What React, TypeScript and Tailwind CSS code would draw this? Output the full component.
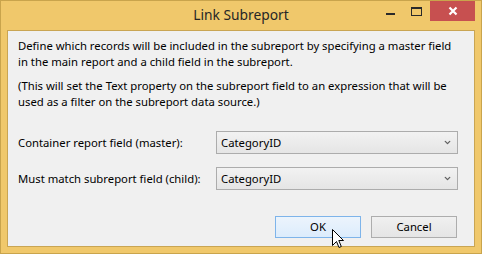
import { ChevronDown } from 'lucide-react'

function Combo({ value }: { value: string }) {
  return (
    <div className="flex h-[23px] w-[242px] items-center justify-between border border-[#acacac] bg-gradient-to-b from-[#f2f2f2] to-[#e5e5e5] pl-[4px] pr-[5px]">
      <span className="leading-4">{value}</span>
      <ChevronDown className="h-[9px] w-[9px] text-[#606060]" strokeWidth={3.5} />
    </div>
  )
}

function Cursor() {
  return (
    <svg className="pointer-events-none absolute left-[56px] top-[12px]" width="13" height="20" viewBox="0 0 13 20">
      <path d="M0.5 0.5 L0.5 16.5 L4.5 12.5 L7 18.5 L9.3 17.5 L6.8 11.5 L11.5 11.5 Z" fill="#fff" stroke="#000" strokeWidth="1" strokeLinejoin="miter" />
    </svg>
  )
}

export default function App() {
  return (
    <div className="flex h-[254px] w-[482px] flex-col border border-[#c9a44c] bg-[#f0c86b] font-['Noto_Sans',sans-serif] text-[11.3px] text-black">
      {/* title bar */}
      <div className="relative flex h-[29px] items-start">
        <div className="absolute inset-x-0 top-[4px] text-center text-[13.8px] leading-5 text-[#262626]">Link Subreport</div>
        <div className="ml-auto mr-[6px] flex items-start">
          <div className="flex h-[20px] w-[26px] items-center justify-center">
            <div className="mt-[6px] h-[2px] w-[9px] bg-[#2a2a2a]" />
          </div>
          <div className="flex h-[20px] w-[27px] items-start justify-center pt-[6px]">
            <div className="h-[9px] w-[11px] border border-t-2 border-[#2a2a2a]" />
          </div>
          <div className="flex h-[20px] w-[45px] items-center justify-center bg-[#c75050]">
            <svg width="10" height="10" viewBox="0 0 10 10">
              <path d="M1.5 1.5 L8.5 8.5 M8.5 1.5 L1.5 8.5" stroke="#fff" strokeWidth="2.2" />
            </svg>
          </div>
        </div>
      </div>

      {/* client area */}
      <div className="mx-[6px] flex flex-1 flex-col border border-[#c9a553] bg-[#f0f0f0] pl-[10px] pr-[16px] pt-[7px]">
        <p className="whitespace-nowrap leading-4">
          Define which records will be included in the subreport by specifying a master field
          <br />
          in the main report and a child field in the subreport.
        </p>
        <p className="mt-[8px] whitespace-nowrap leading-4">
          (This will set the Text property on the subreport field to an expression that will be
          <br />
          used as a filter on the subreport data source.)
        </p>

        <div className="mt-[21px] grid grid-cols-[198px_242px] items-center gap-y-[13px]">
          <span className="leading-4">Container report field (master):</span>
          <Combo value="CategoryID" />
          <span className="leading-4">Must match subreport field (child):</span>
          <Combo value="CategoryID" />
        </div>

        <div className="mt-[26px] flex justify-end gap-[10px] pr-[1px]">
          <div className="relative flex h-[22px] w-[86px] items-center justify-center border border-[#7eb4ea] bg-gradient-to-b from-[#ecf4fc] to-[#dcecfc] leading-4">
            OK
            <Cursor />
          </div>
          <div className="flex h-[22px] w-[86px] items-center justify-center border border-[#adadad] bg-gradient-to-b from-[#f0f0f0] to-[#e5e5e5] leading-4">
            Cancel
          </div>
        </div>
      </div>
      <div className="h-[6px]" />
    </div>
  )
}
